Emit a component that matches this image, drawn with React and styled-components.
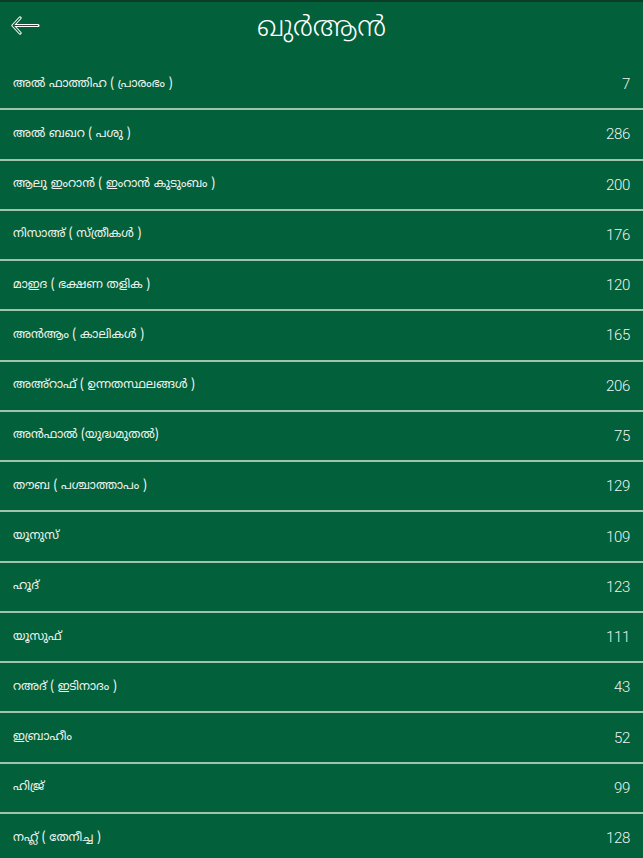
import React from "react";
import styled, { createGlobalStyle } from "styled-components";

const Global = createGlobalStyle`
  html, body { margin: 0; padding: 0; background: #02603a; }
  body { font-family: "Noto Sans Malayalam", "Noto Sans", Roboto, sans-serif; }
`;

const Page = styled.div`
  width: 643px;
  height: 858px;
  overflow: hidden;
  background: #02603a;
  border-top: 2px solid #0b3d26;
  box-sizing: border-box;
  display: flex;
  flex-direction: column;
`;

const Header = styled.header`
  flex-shrink: 0;
  height: 58px;
  display: grid;
  grid-template-columns: 60px 1fr 60px;
  align-items: center;
  color: #fff;
`;

const BackButton = styled.button`
  background: none;
  border: none;
  padding: 0 0 10px 11px;
  height: 100%;
  display: flex;
  align-items: center;
  cursor: pointer;
`;

const Title = styled.h1`
  margin: 0;
  text-align: center;
  font-size: 28px;
  font-weight: 300;
  color: #fff;
  line-height: 1;
  padding-bottom: 3px;
`;

const List = styled.ul`
  flex-shrink: 0;
  list-style: none;
  margin: 0;
  padding: 0;
`;

const Row = styled.li`
  height: 48.27px;
  border-bottom: 2px solid #9fc4ab;
  display: flex;
  align-items: center;
  justify-content: space-between;
  padding: 0 13px;
  color: #eef5f0;
`;

const Name = styled.span`
  font-family: "Noto Sans Malayalam", "Noto Sans", sans-serif;
  font-size: 12px;
`;

const Count = styled.span`
  font-family: Roboto, "Liberation Sans", sans-serif;
  font-size: 15px;
  font-weight: 300;
  letter-spacing: -0.3px;
`;

const chapters = [
  ["അൽ ഫാത്തിഹ ( പ്രാരംഭം )", 7],
  ["അൽ ബഖറ ( പശു )", 286],
  ["ആലു ഇംറാൻ ( ഇംറാൻ കുടുംബം )", 200],
  ["നിസാഅ് ( സ്ത്രീകൾ )", 176],
  ["മാഇദ ( ഭക്ഷണ തളിക )", 120],
  ["അൻആം ( കാലികൾ )", 165],
  ["അഅ്റാഫ് ( ഉന്നതസ്ഥലങ്ങൾ )", 206],
  ["അൻഫാൽ (യുദ്ധമുതൽ)", 75],
  ["തൗബ ( പശ്ചാത്താപം )", 129],
  ["യൂനുസ്", 109],
  ["ഹൂദ്", 123],
  ["യൂസുഫ്", 111],
  ["റഅദ് ( ഇടിനാദം )", 43],
  ["ഇബ്രാഹീം", 52],
  ["ഹിജ്ര്", 99],
  ["നഹ്ല് ( തേനീച്ച )", 128],
];

const BackArrow = () => (
  <svg width="30" height="20" viewBox="0 0 30 20">
    <g fill="none" strokeLinecap="round" strokeLinejoin="round">
      <path d="M9 2 L2 9.5 L9 17 M2 9.5 H27" stroke="#fff" strokeWidth="3.2" />
      <path d="M9 2 L2 9.5 L9 17 M3 9.5 H26.5" stroke="#02603a" strokeWidth="1.1" />
    </g>
  </svg>
);

export default function App() {
  return (
    <>
      <Global />
      <Page>
        <Header>
          <BackButton aria-label="back">
            <BackArrow />
          </BackButton>
          <Title>ഖുർആൻ</Title>
          <span />
        </Header>
        <List>
          {chapters.map(([name, count]) => (
            <Row key={name}>
              <Name>{name}</Name>
              <Count>{count}</Count>
            </Row>
          ))}
        </List>
      </Page>
    </>
  );
}
